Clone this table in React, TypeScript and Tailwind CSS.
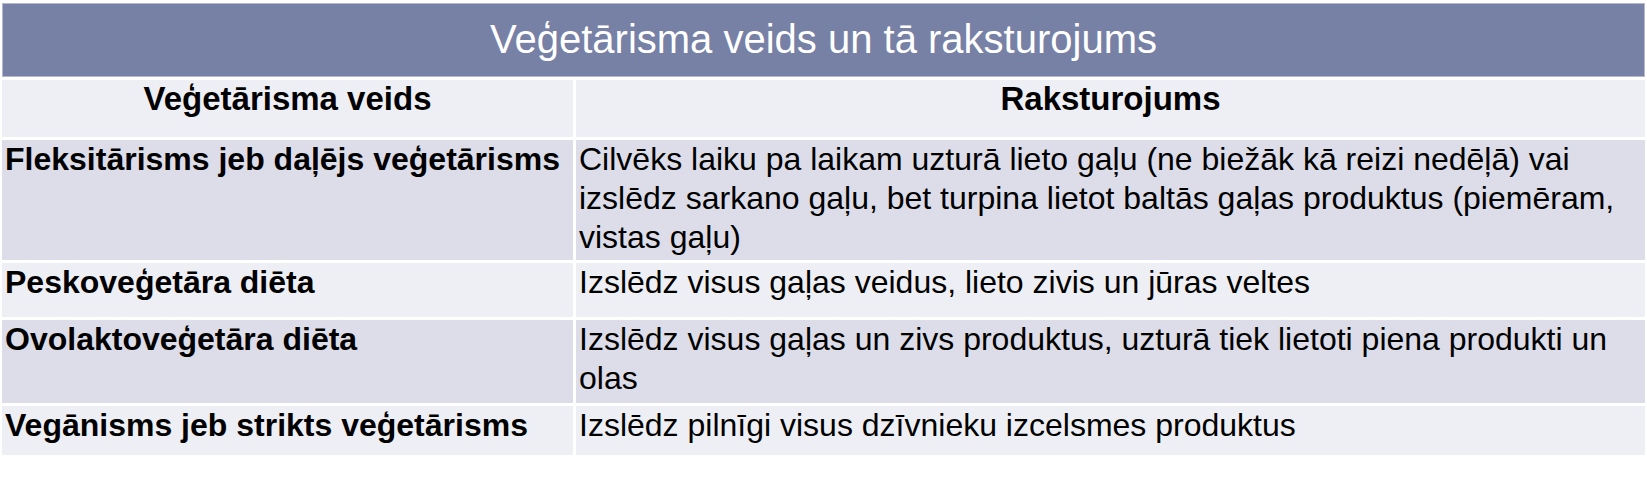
import React from "react";

const rows = [
  {
    kind: "Fleksitārisms jeb daļējs veģetārisms",
    text: "Cilvēks laiku pa laikam uzturā lieto gaļu (ne biežāk kā reizi nedēļā) vai izslēdz sarkano gaļu, bet turpina lietot baltās gaļas produktus (piemēram, vistas gaļu)",
    h: "h-[120px]",
    bg: "bg-[#dcdde8]",
  },
  {
    kind: "Peskoveģetāra diēta",
    text: "Izslēdz visus gaļas veidus, lieto zivis un jūras veltes",
    h: "h-[54px]",
    bg: "bg-[#eeeff4]",
  },
  {
    kind: "Ovolaktoveģetāra diēta",
    text: "Izslēdz visus gaļas un zivs produktus, uzturā tiek lietoti piena produkti un olas",
    h: "h-[83px]",
    bg: "bg-[#dcdde8]",
  },
  {
    kind: "Vegānisms jeb strikts veģetārisms",
    text: "Izslēdz pilnīgi visus dzīvnieku izcelsmes produktus",
    h: "h-[49px]",
    bg: "bg-[#eeeff4]",
  },
];

export default function App() {
  return (
    <div className="w-[1647px] h-[503px] bg-white pt-[3px] px-[2px] font-['Liberation_Sans_Narrow','Liberation_Sans',sans-serif] text-black">
      <div className="h-[74px] bg-[#7780a5] border border-[#b4b8cc] flex items-center justify-center text-white text-[40px] font-light pb-[2px]">
        Veģetārisma veids un tā raksturojums
      </div>
      <div className="grid grid-cols-[571px_1fr] gap-[3px] mt-[3px]">
        <div className="h-[57px] bg-[#eeeff4] text-center font-bold text-[33px] leading-[38px]">
          Veģetārisma veids
        </div>
        <div className="h-[57px] bg-[#eeeff4] text-center font-bold text-[33px] leading-[38px]">
          Raksturojums
        </div>
        {rows.map((r) => (
          <React.Fragment key={r.kind}>
            <div className={`${r.h} ${r.bg} px-[3px] font-bold text-[32px] leading-[39px]`}>
              {r.kind}
            </div>
            <div className={`${r.h} ${r.bg} px-[3px] text-[32px] leading-[39px]`}>
              {r.text}
            </div>
          </React.Fragment>
        ))}
      </div>
    </div>
  );
}
